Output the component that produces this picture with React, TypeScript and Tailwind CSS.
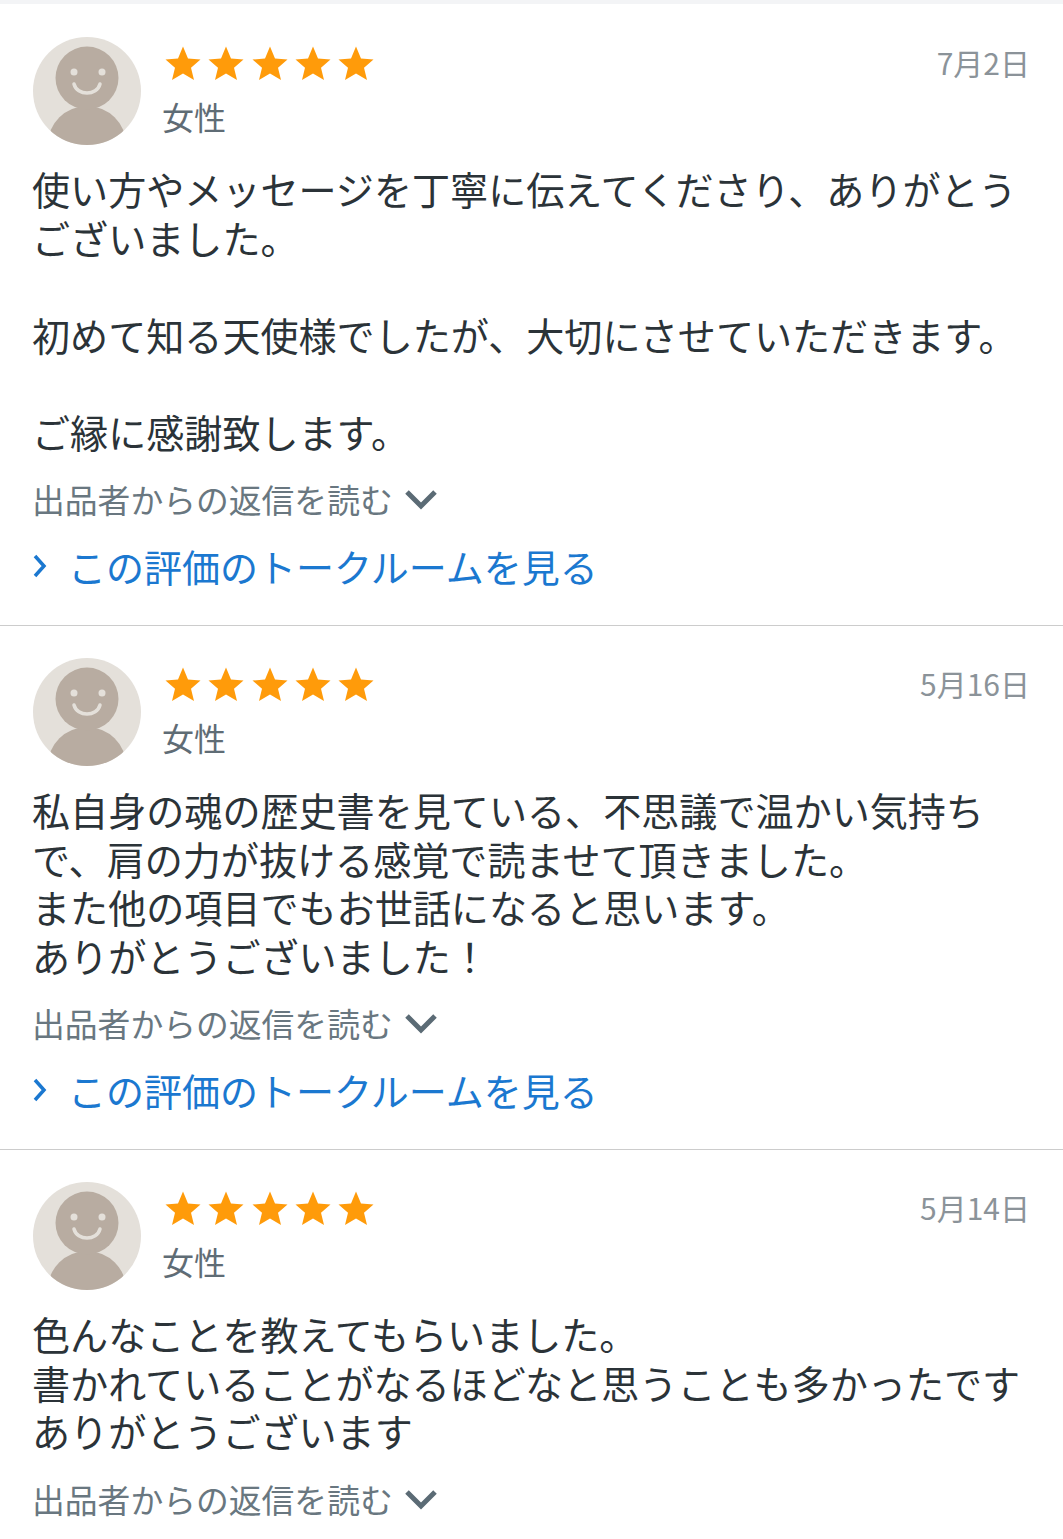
const reviews = [
  {
    date: "7月2日",
    text: "使い方やメッセージを丁寧に伝えてくださり、ありがとうございました。\n\n初めて知る天使様でしたが、大切にさせていただきます。\n\nご縁に感謝致します。",
    link: true,
  },
  {
    date: "5月16日",
    text: "私自身の魂の歴史書を見ている、不思議で温かい気持ちで、肩の力が抜ける感覚で読ませて頂きました。\nまた他の項目でもお世話になると思います。\nありがとうございました！",
    link: true,
  },
  {
    date: "5月14日",
    text: "色んなことを教えてもらいました。\n書かれていることがなるほどなと思うことも多かったです\nありがとうございます",
    link: false,
  },
];

function Avatar() {
  return (
    <svg width="108" height="108" viewBox="0 0 108 108" className="shrink-0">
      <defs>
        <clipPath id="avatar-clip">
          <circle cx="54" cy="54" r="54" />
        </clipPath>
      </defs>
      <circle cx="54" cy="54" r="54" fill="#e4e0da" />
      <g clipPath="url(#avatar-clip)">
        <ellipse cx="54" cy="107" rx="39" ry="38" fill="#b8aca1" />
        <circle cx="54" cy="41" r="31.5" fill="#b8aca1" />
        <circle cx="41" cy="35" r="3.5" fill="#e4e0da" />
        <circle cx="69" cy="35" r="3.5" fill="#e4e0da" />
        <path d="M41 47c3 12 23 12 26 0" fill="none" stroke="#e4e0da" strokeWidth="3.5" strokeLinecap="round" />
      </g>
    </svg>
  );
}

function Star() {
  return (
    <svg width="36" height="34" viewBox="0 0 36 34" className="shrink-0">
      <path d="M18 0.5l5 12 12.5 1-9.500 8.200 3 12.300L18 27.500 7 34l3-12.300L0.500 13.500 13 12.500z" fill="#ff9b0a" />
    </svg>
  );
}

function Review({ date, text, link }: { date: string; text: string; link: boolean }) {
  return (
    <div className="border-b border-[#cccccc] px-[33px] pt-[32px] pb-[34px] first:pt-[33px] last:border-b-0">
      <div className="flex">
        <Avatar />
        <div className="ml-[21px] flex-1">
          <div className="mt-[9px] flex gap-[7.250px] pl-[3px]">
            <Star />
            <Star />
            <Star />
            <Star />
            <Star />
          </div>
          <div className="mt-[14px] text-[32px] leading-[44px] text-[#5f6c75]">女性</div>
        </div>
        <div className="mt-[7px] text-[30px] leading-[36px] text-[#8b9399]">{date}</div>
      </div>
      <p className="-ml-px mt-[20px] whitespace-pre-wrap text-[38.100px] leading-[48.500px] text-[#2b3338]">{text}</p>
      <div className="-ml-px mt-[18px] flex items-center text-[32.800px] leading-[50px] text-[#697780]">
        <span>出品者からの返信を読む</span>
        <svg width="34" height="22" viewBox="0 0 34 22" className="ml-[11px]">
          <path d="M3 4l14 14L31 4" fill="none" stroke="#5b6b75" strokeWidth="5" />
        </svg>
      </div>
      {link && (
        <div className="mt-[17px] flex items-center text-[38px] leading-[50px] text-[#1b78d0]">
          <svg width="14" height="24" viewBox="0 0 14 24" className="mr-[21px]">
            <path d="M2 2l9 10-9 10" fill="none" stroke="#1b78d0" strokeWidth="3.500" />
          </svg>
          <span>この評価のトークルームを見る</span>
        </div>
      )}
    </div>
  );
}

export default function App() {
  return (
    <div
      className="h-[1539px] w-[1063px] overflow-hidden border-t-[4px] border-[#f3f4f6] bg-white"
      style={{ fontFamily: '"Noto Sans CJK JP", sans-serif' }}
    >
      {reviews.map((r) => (
        <Review key={r.date} date={r.date} text={r.text} link={r.link} />
      ))}
    </div>
  );
}
